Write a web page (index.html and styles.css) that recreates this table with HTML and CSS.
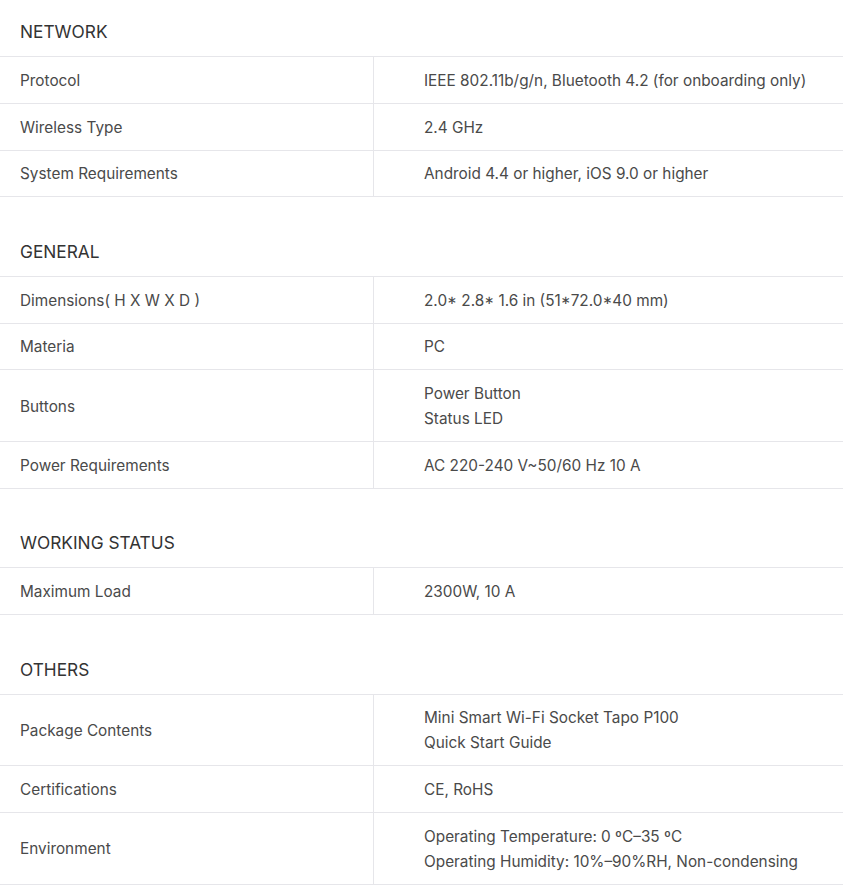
FILE: index.html
```html
<!DOCTYPE html>
<html>
<head>
<meta charset="utf-8">
<link rel="stylesheet" href="styles.css">
</head>
<body>
<div class="specs">
  <section class="spec-group first">
    <h3 class="spec-title">NETWORK</h3>
    <table class="spec-table">
      <tr><td class="k">Protocol</td><td class="v">IEEE 802.11b/g/n, Bluetooth 4.2 (for onboarding only)</td></tr>
      <tr><td class="k">Wireless Type</td><td class="v">2.4 GHz</td></tr>
      <tr><td class="k">System Requirements</td><td class="v">Android 4.4 or higher, iOS 9.0 or higher</td></tr>
    </table>
  </section>
  <section class="spec-group">
    <h3 class="spec-title">GENERAL</h3>
    <table class="spec-table">
      <tr><td class="k">Dimensions( H X W X D )</td><td class="v">2.0* 2.8* 1.6 in (51*72.0*40 mm)</td></tr>
      <tr><td class="k">Materia</td><td class="v">PC</td></tr>
      <tr><td class="k">Buttons</td><td class="v">Power Button<br>Status LED</td></tr>
      <tr><td class="k">Power Requirements</td><td class="v">AC 220-240 V~50/60 Hz 10 A</td></tr>
    </table>
  </section>
  <section class="spec-group">
    <h3 class="spec-title">WORKING STATUS</h3>
    <table class="spec-table">
      <tr><td class="k">Maximum Load</td><td class="v">2300W, 10 A</td></tr>
    </table>
  </section>
  <section class="spec-group">
    <h3 class="spec-title">OTHERS</h3>
    <table class="spec-table">
      <tr><td class="k">Package Contents</td><td class="v">Mini Smart Wi-Fi Socket Tapo P100<br>Quick Start Guide</td></tr>
      <tr><td class="k">Certifications</td><td class="v">CE, RoHS</td></tr>
      <tr><td class="k">Environment</td><td class="v">Operating Temperature: 0 ºC–35 ºC<br>Operating Humidity: 10%–90%RH, Non-condensing</td></tr>
    </table>
  </section>
</div>
</body>
</html>
```

FILE: styles.css
```css
html, body {
  margin: 0;
  padding: 0;
  background: #fff;
}
body {
  font-family: Inter, "Noto Sans", sans-serif;
  color: #4a4a4a;
}
.spec-group {
  margin-top: 22.5px;
}
.spec-group.first {
  margin-top: 0;
}
.spec-title {
  margin: 0;
  padding: 20px 20px 0;
  height: 36px;
  box-sizing: content-box;
  font-size: 17.3px;
  font-weight: 400;
  line-height: 24px;
  color: #333;
}
.spec-table {
  width: 100%;
  border-collapse: collapse;
  border-top: 1px solid #e6e6ea;
}
.spec-table td {
  border-bottom: 1px solid #e6e6ea;
  padding: 10.75px 0 10px;
  font-size: 15.35px;
  line-height: 25px;
  vertical-align: middle;
}
.spec-table td.k {
  width: 353px;
  padding-left: 20px;
  border-right: 1px solid #e6e6ea;
}
.spec-table td.v {
  padding-left: 50px;
}
```
